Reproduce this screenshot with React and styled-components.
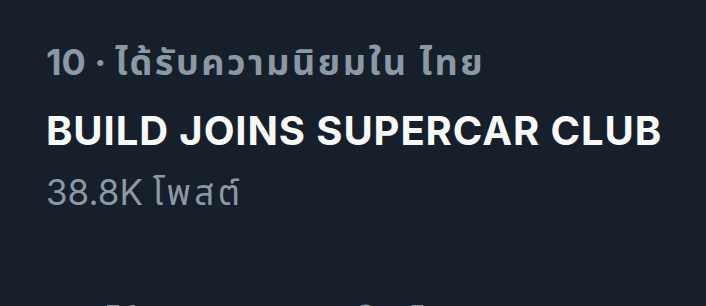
import React from "react";
import styled, { createGlobalStyle } from "styled-components";

const GlobalStyle = createGlobalStyle`
  html, body {
    margin: 0;
    padding: 0;
    background: #161f2a;
  }
`;

const trends = [
  { rank: 10, topic: "BUILD JOINS SUPERCAR CLUB", posts: "38.8K" },
  { rank: 11, topic: "#ทีมชาติไทย", posts: "12.4K" },
];

const App = () => {
  return (
    <>
      <GlobalStyle />
      <TrendList>
        {trends.map((t) => (
          <TrendItem key={t.rank}>
            <Meta>
              {t.rank} · <Thai $spacing={2.5}>ได้รับความนิยมใน ไทย</Thai>
            </Meta>
            <Topic>{t.topic}</Topic>
            <Posts>
              {t.posts} <Thai $spacing={3.5}>โพสต์</Thai>
            </Posts>
          </TrendItem>
        ))}
      </TrendList>
    </>
  );
};

const TrendList = styled.div`
  width: 706px;
  height: 306px;
  overflow: hidden;
  background: #161f2a;
  font-family: Inter, "Noto Sans", "Noto Sans Thai", sans-serif;
`;

const TrendItem = styled.div`
  display: flex;
  flex-direction: column;
  gap: 11px;
  padding: 34px 46px 48px;
`;

const Thai = styled.span`
  letter-spacing: ${(p) => p.$spacing}px;
`;

const Meta = styled.div`
  color: #8b98a5;
  font-size: 36px;
  font-weight: 700;
  line-height: 56px;
  white-space: nowrap;
`;

const Topic = styled.div`
  color: #f7f9f9;
  font-size: 40px;
  font-weight: 700;
  line-height: 60px;
  letter-spacing: 0.9px;
  white-space: nowrap;
`;

const Posts = styled.div`
  color: #8b98a5;
  font-size: 35px;
  font-weight: 400;
  line-height: 40px;
  white-space: nowrap;
`;

export default App;
